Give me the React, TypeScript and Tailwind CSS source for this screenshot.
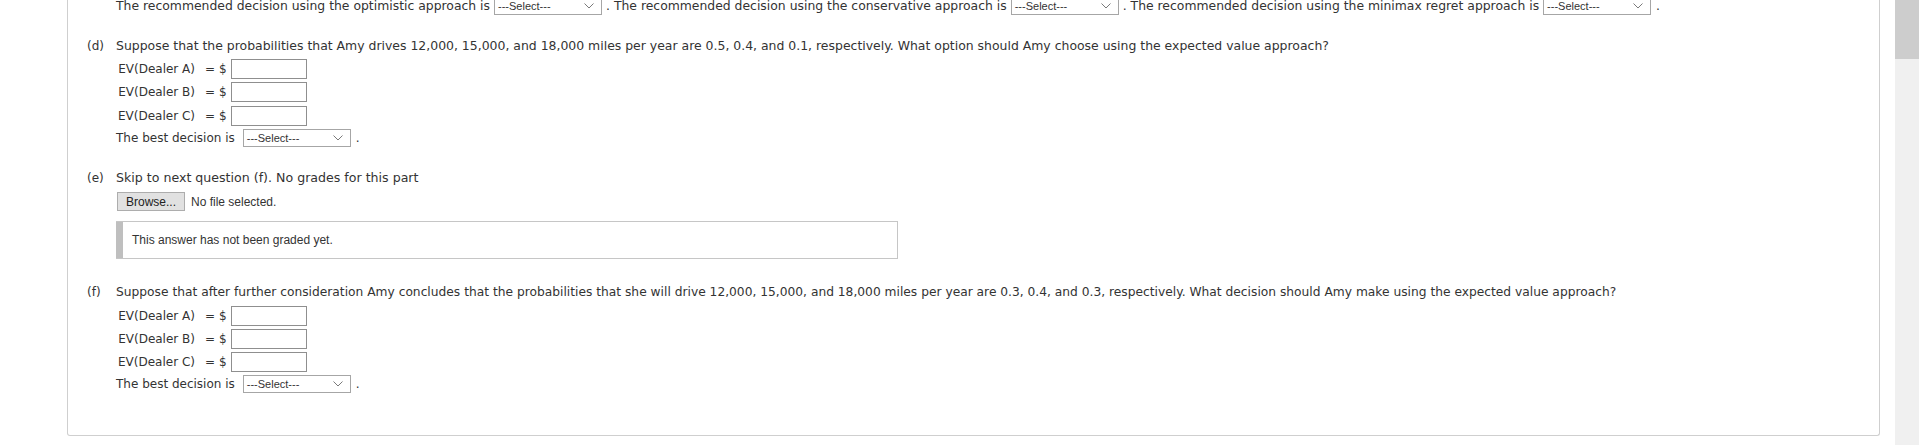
import React from "react";

// Graded homework page, bottom part of a decision-analysis question.

function SelectBox({ className = "" }: { className?: string }): React.ReactElement {
	return (
		<span
			className={`inline-flex h-[18px] w-[108px] shrink-0 items-center justify-between border border-[#a6a6a6] bg-white pl-[3px] pr-[7px] font-['Liberation_Sans',Arial,sans-serif] text-[11px] leading-none text-[#333] ${className}`}
		>
			<span>---Select---</span>
			<svg width="10" height="6" viewBox="0 0 10 6" fill="none">
				<path d="M0.5 0.5 L5 5 L9.5 0.5" stroke="#7a7a7a" strokeWidth="1" />
			</svg>
		</span>
	);
}

function EvRow({ label, className = "" }: { label: string; className?: string }): React.ReactElement {
	return (
		<div className={`flex h-[20px] items-center ${className}`}>
			<span className="w-[79px] text-right">{label}</span>
			<span className="ml-[10px]">=</span>
			<span className="ml-[4px]">$</span>
			<span className="ml-[4px] h-[20px] w-[76px] border border-[#8f8f8f] bg-white" />
		</div>
	);
}

function BestDecision({ className = "" }: { className?: string }): React.ReactElement {
	return (
		<div className={`flex h-[18px] items-center ${className}`}>
			<span>The best decision is</span>
			<SelectBox className="ml-[8px]" />
			<span className="ml-[5px]">.</span>
		</div>
	);
}

function PartHeading({
	tag,
	children,
	className = "",
	textClass = "text-[12.4px]",
}: {
	tag: string;
	children: React.ReactNode;
	className?: string;
	textClass?: string;
}): React.ReactElement {
	return (
		<div className={`-ml-[29px] flex h-[18px] items-center whitespace-nowrap ${className}`}>
			<span className="w-[29px] text-[12px]">{tag}</span>
			<span className={textClass}>{children}</span>
		</div>
	);
}

export default function App(): React.ReactElement {
	return (
		<div className="flex h-[445px] w-[1919px] overflow-hidden bg-white">
			<div className="flex-1 pl-[67px] pr-[15px]">
				<div className="h-[436px] overflow-hidden rounded-b-[3px] border-x border-b border-[#cfcfcf] bg-white">
					<div className="-mt-[3px] pl-[48px] font-['DejaVu_Sans',Verdana,sans-serif] text-[12px] text-[#333]">
						<div className="flex h-[18px] items-center whitespace-nowrap text-[12.4px]">
							<span>The recommended decision using the optimistic approach is</span>
							<SelectBox className="ml-[4px]" />
							<span className="ml-[4px]">. The recommended decision using the conservative approach is</span>
							<SelectBox className="ml-[4px]" />
							<span className="ml-[4px]">. The recommended decision using the minimax regret approach is</span>
							<SelectBox className="ml-[4px]" />
							<span className="ml-[5px]">.</span>
						</div>

						<PartHeading tag="(d)" className="mt-[22px]" textClass="text-[12.45px]">
							Suppose that the probabilities that Amy drives 12,000, 15,000, and 18,000 miles per year are 0.5, 0.4, and
							0.1, respectively. What option should Amy choose using the expected value approach?
						</PartHeading>
						<EvRow label="EV(Dealer A)" className="mt-[4px]" />
						<EvRow label="EV(Dealer B)" className="mt-[3px]" />
						<EvRow label="EV(Dealer C)" className="mt-[4px]" />
						<BestDecision className="mt-[3px]" />

						<PartHeading tag="(e)" className="mt-[22px]" textClass="text-[12.6px]">
							Skip to next question (f). No grades for this part
						</PartHeading>
						<div className="mt-[5px] flex items-center font-['Liberation_Sans',Arial,sans-serif] text-[12px]">
							<span className="ml-[1px] flex h-[19px] w-[68px] items-center justify-center border border-[#adadad] bg-[#e1e1e1] text-[#222]">
								Browse...
							</span>
							<span className="ml-[6px] text-[#333]">No file selected.</span>
						</div>
						<div className="mt-[10px] flex h-[38px] w-[782px] border border-l-0 border-[#c6c6c6]">
							<div className="w-[7px] bg-[#bfbfbf]" />
							<div className="flex items-center pl-[9px] font-['Liberation_Sans',Arial,sans-serif] text-[12px] text-[#333]">
								This answer has not been graded yet.
							</div>
						</div>

						<PartHeading tag="(f)" className="mt-[24px]" textClass="text-[12.25px]">
							Suppose that after further consideration Amy concludes that the probabilities that she will drive 12,000,
							15,000, and 18,000 miles per year are 0.3, 0.4, and 0.3, respectively. What decision should Amy make using the
							expected value approach?
						</PartHeading>
						<EvRow label="EV(Dealer A)" className="mt-[5px]" />
						<EvRow label="EV(Dealer B)" className="mt-[3px]" />
						<EvRow label="EV(Dealer C)" className="mt-[3px]" />
						<BestDecision className="mt-[3px]" />
					</div>
				</div>
			</div>
			<div className="w-[24px] bg-[#f0f0f0]">
				<div className="h-[59px] bg-[#cdcdcd]" />
			</div>
		</div>
	);
}
